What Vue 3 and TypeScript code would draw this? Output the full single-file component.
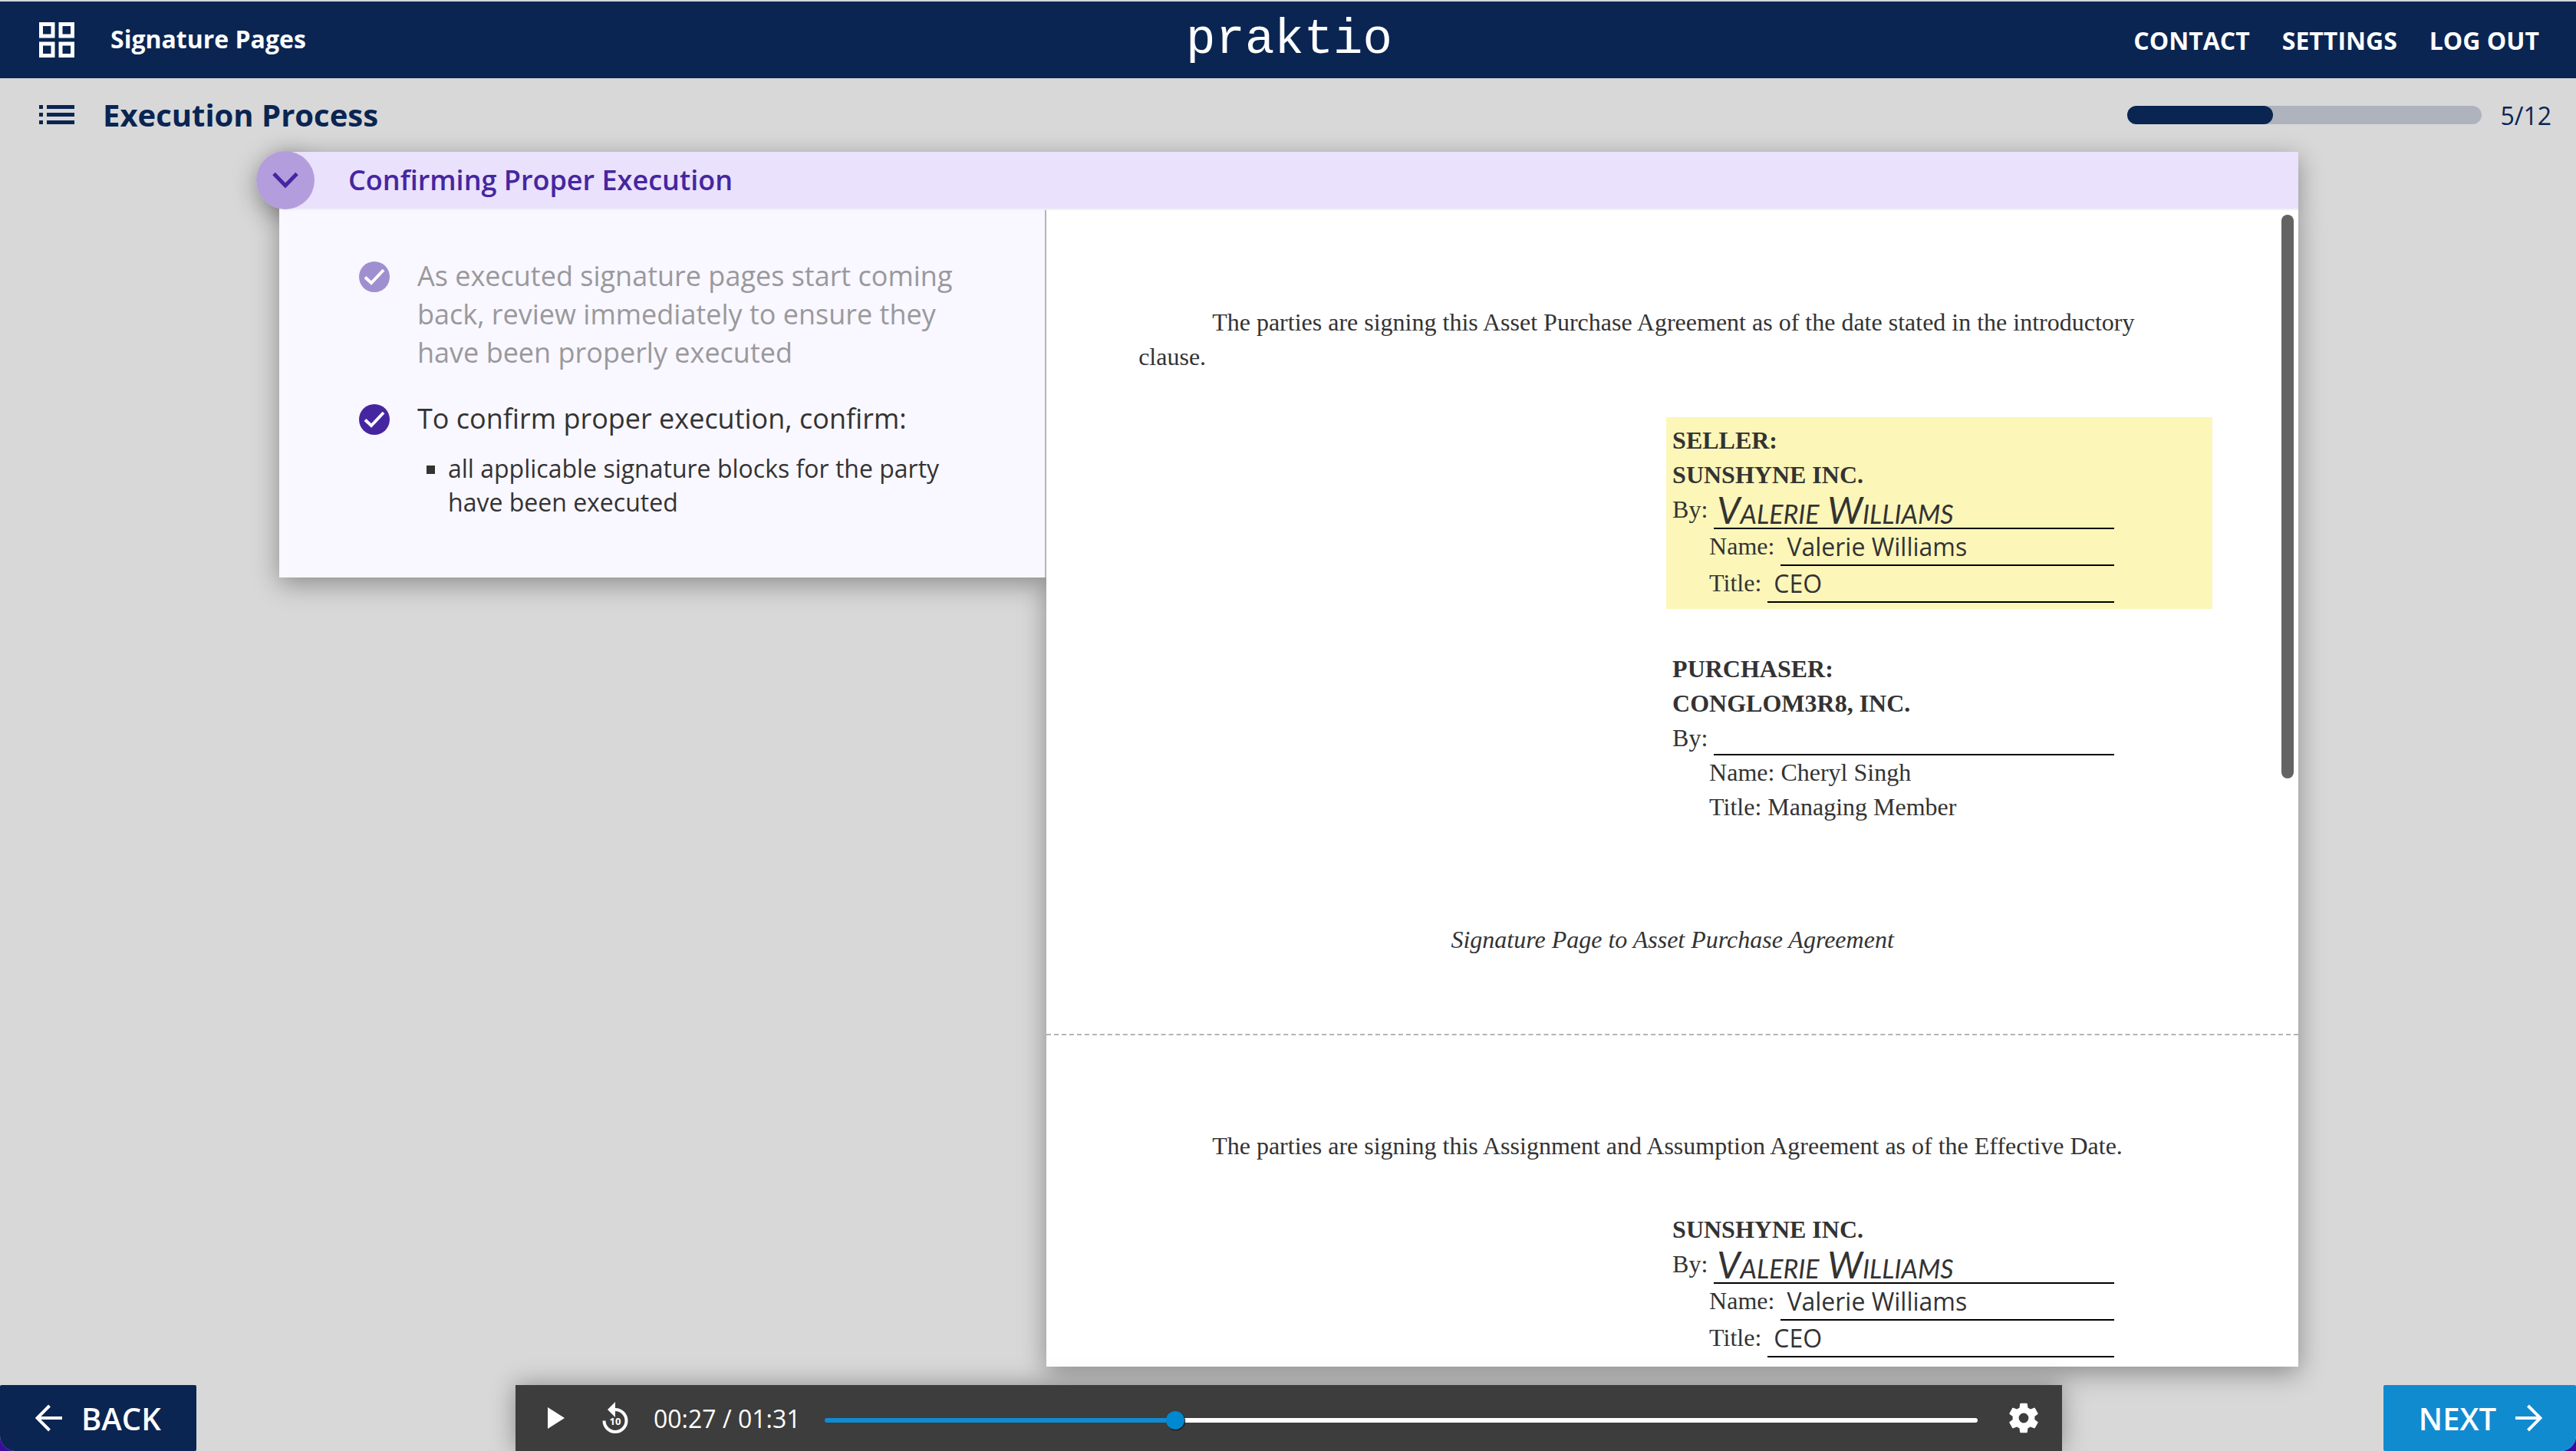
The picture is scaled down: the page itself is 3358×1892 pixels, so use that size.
<script setup lang="ts">
import { computed, ref } from 'vue'

interface Field {
  label: string
  value: string
  kind: 'signature' | 'filled' | 'blank' | 'plain'
}

interface Block {
  headings: string[]
  highlighted: boolean
  fields: Field[]
}

interface Sheet {
  intro: string
  blocks: Block[]
  footer: string
}

const links: string[] = ['Contact', 'Settings', 'Log out']

const step = 5
const steps = 12
const progress = computed(() => Math.floor((step / steps) * 100))

const duration = 91
const position = ref(27.4)
const played = computed(() => (position.value / duration) * 100)

function clock(seconds: number): string {
  const minutes = Math.floor(seconds / 60)
  const rest = Math.floor(seconds % 60)
  return `${String(minutes).padStart(2, '0')}:${String(rest).padStart(2, '0')}`
}

const sellerFields: Field[] = [
  { label: 'By:', value: 'Valerie Williams', kind: 'signature' },
  { label: 'Name:', value: 'Valerie Williams', kind: 'filled' },
  { label: 'Title:', value: 'CEO', kind: 'filled' },
]

const sheets: Sheet[] = [
  {
    intro: 'The parties are signing this Asset Purchase Agreement as of the date stated in the introductory clause.',
    blocks: [
      { headings: ['SELLER:', 'SUNSHYNE INC.'], highlighted: true, fields: sellerFields },
      {
        headings: ['PURCHASER:', 'CONGLOM3R8, INC.'],
        highlighted: false,
        fields: [
          { label: 'By:', value: '', kind: 'blank' },
          { label: 'Name:', value: 'Cheryl Singh', kind: 'plain' },
          { label: 'Title:', value: 'Managing Member', kind: 'plain' },
        ],
      },
    ],
    footer: 'Signature Page to Asset Purchase Agreement',
  },
  {
    intro: 'The parties are signing this Assignment and Assumption Agreement as of the Effective Date.',
    blocks: [{ headings: ['SUNSHYNE INC.'], highlighted: false, fields: sellerFields }],
    footer: '',
  },
]
</script>

<template>
  <div class="app">
    <header class="topbar">
      <div class="topbar-left">
        <button class="icon-button" type="button" aria-label="Modules">
          <svg width="46" height="46" viewBox="0 0 46 46" fill="none" stroke="currentColor" stroke-width="5">
            <path d="M2.500 2.500h15.500v15.500h-15.500zM28 2.500h15.500v15.500h-15.500zM2.500 28h15.500v15.500h-15.500zM28 28h15.500v15.500h-15.500z" />
          </svg>
        </button>
        <span class="course">Signature Pages</span>
      </div>
      <a class="logo" href="#">praktio</a>
      <nav class="links">
        <a v-for="link in links" :key="link" href="#">{{ link }}</a>
      </nav>
    </header>

    <div class="subbar">
      <button class="icon-button" type="button" aria-label="Contents">
        <svg width="46" height="26" viewBox="0 0 46 26" fill="currentColor">
          <path d="M0 0h5v5H0zM10 0h36v5H10zM0 10h5v5H0zM10 10h36v5H10zM0 20h5v5H0zM10 20h36v5H10z" />
        </svg>
      </button>
      <h1>Execution Process</h1>
      <div class="progress" role="progressbar" :aria-valuenow="step" :aria-valuemax="steps">
        <div class="progress-fill" :style="{ width: progress + '%' }"></div>
      </div>
      <span class="count">{{ step }}/{{ steps }}</span>
    </div>

    <main class="stage">
      <section class="panel">
        <div class="panel-head">
          <button class="collapse" type="button" aria-label="Collapse">
            <svg width="34" height="22" viewBox="0 0 34 22" fill="none" stroke="currentColor" stroke-width="5">
              <path d="M2 2.500 17 18 32 2.500" />
            </svg>
          </button>
          <h2>Confirming Proper Execution</h2>
        </div>

        <div class="panel-body">
          <ul class="points">
            <li class="point done">
              <svg class="check" width="40" height="40" viewBox="0 0 40 40">
                <circle cx="20" cy="20" r="20" fill="currentColor" />
                <path d="M8 20.500 16 28 32 11" fill="none" stroke="#fff" stroke-width="4" />
              </svg>
              <p>As executed signature pages start coming back, review immediately to ensure they have been properly executed</p>
            </li>
            <li class="point">
              <svg class="check" width="40" height="40" viewBox="0 0 40 40">
                <circle cx="20" cy="20" r="20" fill="currentColor" />
                <path d="M8 20.500 16 28 32 11" fill="none" stroke="#fff" stroke-width="4" />
              </svg>
              <div>
                <p>To confirm proper execution, confirm:</p>
                <ul class="subpoints">
                  <li>all applicable signature blocks for the party have been executed</li>
                </ul>
              </div>
            </li>
          </ul>

          <div class="document">
            <article v-for="sheet in sheets" :key="sheet.intro" class="sheet">
              <p class="intro">{{ sheet.intro }}</p>
              <div
                v-for="block in sheet.blocks"
                :key="block.headings[0]"
                class="block"
                :class="{ highlighted: block.highlighted }"
              >
                <strong v-for="heading in block.headings" :key="heading">{{ heading }}</strong>
                <div
                  v-for="field in block.fields"
                  :key="field.label"
                  class="field"
                  :class="[field.kind, { indented: field.label !== 'By:' }]"
                >
                  <span>{{ field.label }}</span>
                  <span class="value">{{ field.value }}</span>
                </div>
              </div>
              <p v-if="sheet.footer" class="sheet-footer">{{ sheet.footer }}</p>
            </article>
            <div class="scroll-thumb"></div>
          </div>
        </div>
      </section>
    </main>

    <footer class="controls">
      <button class="step-button back" type="button">
        <svg width="36" height="36" viewBox="0 0 36 36" fill="none" stroke="currentColor" stroke-width="4">
          <path d="M35 18H3M18.500 2 2.500 18l16 16" />
        </svg>
        BACK
      </button>
      <div class="player">
        <button class="icon-button" type="button" aria-label="Play">
          <svg width="22" height="28" viewBox="0 0 22 28" fill="currentColor"><path d="M0 0 22 14 0 28z" /></svg>
        </button>
        <button class="icon-button replay" type="button" aria-label="Back ten seconds">
          <svg width="34" height="42" viewBox="0 0 34 42">
            <path d="M2.500 24.500A14.500 14.500 0 1 0 17 10" fill="none" stroke="currentColor" stroke-width="4" />
            <path d="M17 0v20L7 10z" fill="currentColor" />
            <text x="17" y="30" font-size="13" font-weight="700" text-anchor="middle" fill="currentColor">10</text>
          </svg>
        </button>
        <span class="time">{{ clock(position) }} / {{ clock(duration) }}</span>
        <input
          v-model.number="position"
          class="seek"
          type="range"
          min="0"
          :max="duration"
          step="any"
          aria-label="Seek"
          :style="{ '--played': played + '%' }"
        />
        <button class="icon-button" type="button" aria-label="Player settings">
          <svg width="40" height="40" viewBox="2 2 20 20" fill="currentColor">
            <path d="M19.140 12.940c.040-.300.060-.610.060-.940 0-.320-.020-.640-.070-.940l2.030-1.580c.180-.140.230-.410.120-.610l-1.920-3.320c-.120-.220-.370-.290-.590-.220l-2.390.960c-.500-.380-1.030-.700-1.620-.940l-.360-2.540c-.040-.240-.240-.410-.480-.410h-3.840c-.240 0-.430.170-.470.410l-.360 2.540c-.590.240-1.130.570-1.620.940l-2.390-.960c-.220-.080-.470 0-.590.220L2.740 8.870c-.120.210-.080.470.120.610l2.030 1.580c-.050.300-.090.630-.090.940s.020.640.070.940l-2.030 1.580c-.180.140-.230.410-.120.610l1.920 3.320c.120.220.370.290.590.220l2.390-.960c.500.380 1.030.700 1.620.940l.360 2.540c.050.240.240.410.480.410h3.840c.240 0 .440-.170.470-.410l.360-2.540c.590-.240 1.130-.560 1.620-.940l2.390.960c.220.080.470 0 .590-.220l1.920-3.320c.120-.220.070-.470-.120-.610l-2.010-1.580zM12 15.200a3.200 3.200 0 1 1 0-6.400 3.200 3.200 0 0 1 0 6.400z" />
          </svg>
        </button>
      </div>
      <button class="step-button next" type="button">
        NEXT
        <svg width="36" height="36" viewBox="0 0 36 36" fill="none" stroke="currentColor" stroke-width="4">
          <path d="M1 18h32M17.500 2l16 16-16 16" />
        </svg>
      </button>
    </footer>
  </div>
</template>

<style>
body {
  margin: 0;
  background: #3c0a9c;
}
</style>

<style scoped>
.app {
  display: flex;
  flex-direction: column;
  height: 100vh;
  box-sizing: border-box;
  border-top: 2px solid #d2d6dc;
  border-radius: 0 0 20px 20px;
  overflow: hidden;
  background: #d8d8d8;
  color: #333;
  font-family: 'Open Sans', sans-serif;
  font-size: 32px;
}

h1,
h2,
p,
ul {
  margin: 0;
  padding: 0;
  list-style: none;
}

button {
  border: 0;
  padding: 0;
  color: inherit;
  font: inherit;
  cursor: pointer;
}

.icon-button {
  display: flex;
  background: none;
}

.topbar {
  display: grid;
  grid-template-columns: 1fr auto 1fr;
  align-items: center;
  flex: none;
  height: 100px;
  padding: 0 48px 0 51px;
  background: #0a2552;
  color: #fff;
}

.topbar a {
  color: inherit;
  text-decoration: none;
}

.topbar-left {
  display: flex;
  align-items: center;
  gap: 47px;
}

.course {
  padding-bottom: 4px;
  font-weight: 700;
}

.logo {
  font-family: 'Liberation Mono', monospace;
  font-size: 64px;
  line-height: 80px;
}

.links {
  display: flex;
  justify-content: flex-end;
  gap: 42px;
  font-weight: 700;
  text-transform: uppercase;
}

.subbar {
  display: flex;
  align-items: center;
  flex: none;
  height: 96px;
  padding: 0 32px 0 51px;
  color: #0a2552;
}

h1 {
  flex: 1;
  margin-left: 37px;
  padding-bottom: 2px;
  font-size: 40px;
  font-weight: 700;
}

.progress {
  width: 462px;
  height: 24px;
  border-radius: 12px;
  background: #afb3be;
}

.progress-fill {
  height: 100%;
  border-radius: 12px;
  background: #0a2552;
}

.count {
  margin-left: 24px;
}

.stage {
  display: flex;
  flex: 1;
  min-height: 0;
  padding: 0 362px 24px 364px;
}

.panel {
  display: flex;
  flex: 1;
  flex-direction: column;
  min-height: 0;
  isolation: isolate;
}

/* Shadow of the heading bar, kept beneath the panel body */
.panel::before {
  content: '';
  flex: none;
  height: 74px;
  margin-bottom: -74px;
  box-shadow: 0 8px 32px rgba(0, 0, 0, 0.36);
}

.panel-head {
  position: relative;
  z-index: 2;
  display: flex;
  align-items: center;
  gap: 44px;
  flex: none;
  height: 74px;
  border-bottom: 2px solid #f0f0f4;
  background: #eae1fd;
  color: #4626a0;
}

.collapse {
  display: flex;
  align-items: center;
  justify-content: center;
  flex: none;
  width: 76px;
  height: 76px;
  margin-left: -30px;
  border-radius: 50%;
  background: #b39ddd;
}

h2 {
  padding-bottom: 2px;
  font-size: 36px;
  font-weight: 600;
}

.panel-body {
  position: relative;
  z-index: 1;
  display: grid;
  grid-template-columns: 38fr 62fr;
  align-items: start;
  flex: 1;
  min-height: 0;
}

/* Shadow of the document, kept beneath the list of points */
.panel-body::after {
  content: '';
  position: absolute;
  top: 0;
  right: 0;
  bottom: 0;
  left: 38%;
  z-index: -1;
  box-shadow: 0 8px 32px rgba(0, 0, 0, 0.36);
}

/* Shadow of the round button, kept beneath the panel */
.stage {
  position: relative;
  isolation: isolate;
}

.stage::before {
  content: '';
  position: absolute;
  top: -1px;
  left: 334px;
  z-index: -1;
  width: 76px;
  height: 76px;
  border-radius: 50%;
  box-shadow: 0 8px 32px rgba(0, 0, 0, 0.36);
}

.points {
  display: flex;
  flex-direction: column;
  gap: 36px;
  box-sizing: border-box;
  padding: 61px 104px 76px;
  border-right: 2px solid #b4b4b6;
  background: #f9f7ff;
  box-shadow: 0 8px 32px rgba(0, 0, 0, 0.36);
  font-size: 36px;
  line-height: 50px;
}

.point {
  display: flex;
  gap: 36px;
}

.check {
  flex: none;
  margin-top: 6px;
  color: #4626a0;
}

.done {
  color: #99999c;
}

.done .check {
  color: #a08fd0;
}

.subpoints {
  margin-top: 18px;
  padding-left: 40px;
  font-size: 32px;
  line-height: 44px;
}

.subpoints li {
  position: relative;
}

.subpoints li::before {
  content: '';
  position: absolute;
  top: 18px;
  left: -28px;
  width: 11px;
  height: 11px;
  background: #333;
}

.document {
  position: relative;
  align-self: stretch;
  box-sizing: border-box;
  min-height: 0;
  padding-top: 2px;
  overflow: hidden;
  background: #fff;
  font-family: 'Liberation Serif', serif;
  line-height: 45px;
}

.sheet {
  padding: 122px 120px 100px;
}

.sheet + .sheet {
  border-top: 2px dashed #b3b3b3;
}

.intro {
  padding-right: 8px;
  text-indent: 96px;
}

.block {
  display: flex;
  flex-direction: column;
  margin-top: 64px;
  margin-left: 50%;
}

.highlighted {
  margin: 56px -8px -8px calc(50% - 8px);
  padding: 8px;
  background: #fcf6b8;
}

.field {
  display: flex;
  gap: 8px;
  margin-right: 120px;
}

.indented {
  padding-left: 48px;
}

.value {
  flex: 1;
}

.signature .value,
.filled .value {
  border-bottom: 2px solid #000;
  line-height: 46px;
}

.filled .value {
  padding-left: 8px;
  font-family: 'Open Sans', sans-serif;
}

.signature .value {
  padding-left: 4px;
  font-family: Lato, sans-serif;
  font-size: 48px;
  font-style: italic;
  font-variant: small-caps;
}

.blank .value {
  box-sizing: border-box;
  height: 45px;
  border-bottom: 2px solid #000;
}

.sheet-footer {
  margin-top: 128px;
  font-style: italic;
  text-align: center;
}

.scroll-thumb {
  position: absolute;
  top: 6px;
  right: 6px;
  width: 16px;
  height: calc(49% - 4px);
  border-radius: 8px;
  background: #636363;
}

.controls {
  display: grid;
  grid-template-columns: 672px 1fr 670px;
  flex: none;
  height: 86px;
  color: #fff;
}

.step-button {
  display: flex;
  align-items: center;
  gap: 24px;
  border-radius: 2px;
  font-size: 40px;
  font-weight: 600;
}

.back {
  justify-self: start;
  padding: 0 46px;
  background: #0a2552;
}

.next {
  justify-self: end;
  padding: 0 44px 0 46px;
  background: #118bd0;
}

.player {
  position: relative;
  display: flex;
  align-items: center;
  padding: 0 30px 0 42px;
  background: #3d3d3d;
  box-shadow: 0 0 32px rgba(0, 0, 0, 0.36);
}

.replay {
  margin: 0 33px 0 49px;
}

.time {
  margin-right: 31px;
}

.seek {
  flex: 1;
  height: 24px;
  margin: 6px 40px 0 0;
  background: none;
  appearance: none;
}

.seek::-webkit-slider-runnable-track {
  height: 6px;
  border-radius: 3px;
  background: linear-gradient(to right, #118bd0 var(--played), #fff var(--played));
}

.seek::-webkit-slider-thumb {
  width: 24px;
  height: 24px;
  margin-top: -9px;
  border-radius: 50%;
  background: #0088d0;
  box-shadow: 1px 1px 1px #111;
  appearance: none;
}
</style>
